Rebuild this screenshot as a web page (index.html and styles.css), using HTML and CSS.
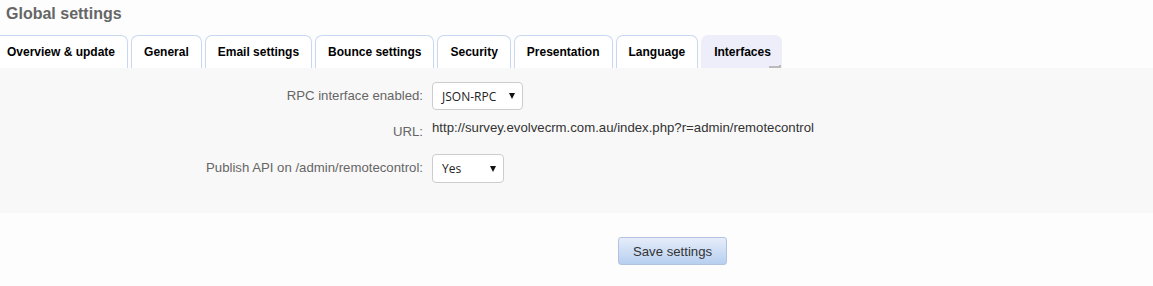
FILE: index.html
```html
<!DOCTYPE html>
<html lang="en">
<head>
  <meta charset="UTF-8" />
  <title>Global settings</title>
  <link rel="stylesheet" href="styles.css">
</head>
<body>
  <h1 class="page-title">Global settings</h1>

  <ul class="tabs">
    <li class="tab">Overview &amp; update</li>
    <li class="tab">General</li>
    <li class="tab">Email settings</li>
    <li class="tab">Bounce settings</li>
    <li class="tab">Security</li>
    <li class="tab">Presentation</li>
    <li class="tab">Language</li>
    <li class="tab active">Interfaces</li>
  </ul>

  <div class="panel">
    <div class="form-row">
      <label class="form-label">RPC interface enabled:</label>
      <div class="select select-rpc">
        <span>JSON-RPC</span>
        <span class="caret"></span>
      </div>
    </div>
    <div class="form-row">
      <label class="form-label">URL:</label>
      <div class="form-value">http://survey.evolvecrm.com.au/index.php?r=admin/remotecontrol</div>
    </div>
    <div class="form-row">
      <label class="form-label">Publish API on /admin/remotecontrol:</label>
      <div class="select select-yes">
        <span>Yes</span>
        <span class="caret"></span>
      </div>
    </div>
  </div>

  <div class="actions">
    <button class="save-btn">Save settings</button>
  </div>
</body>
</html>
```

FILE: styles.css
```css
body {
  margin: 0;
  padding: 0;
  background-color: #fdfdfd;
  font-family: "Liberation Sans", Arial, sans-serif;
  font-size: 13.2px;
}
.page-title {
  margin: 0;
  padding: 5px 6px 0;
  height: 30px;
  font-size: 16px;
  font-weight: bold;
  color: #666;
}
.tabs {
  list-style: none;
  margin: 0 0 0 -6px;
  padding: 0;
  display: flex;
  gap: 3px;
}
.tab {
  height: 33px;
  line-height: 33px;
  padding: 0 12px;
  border: 1px solid #c8d8f2;
  border-bottom: none;
  border-radius: 7px 7px 0 0;
  background: #fff;
  font-size: 12px;
  font-weight: bold;
  color: #000;
  box-sizing: border-box;
}
.tab.active {
  position: relative;
  padding-right: 10px;
  background: #eeeefa;
  border-color: #eeeefa;
}
.tab.active::after {
  content: "";
  position: absolute;
  right: 0;
  bottom: 0;
  width: 12px;
  height: 3px;
  border-right: 2px solid #bbb;
  border-bottom: 2px solid #bbb;
  box-sizing: border-box;
}
.panel {
  background-color: #f8f8f8;
  padding: 14px 0 30px;
  display: flex;
  flex-direction: column;
  gap: 8px;
}
.form-row {
  display: grid;
  grid-template-columns: 423px auto;
  column-gap: 9px;
  align-items: start;
}
.form-label {
  text-align: right;
  color: #666;
  line-height: 28px;
}
.form-value {
  padding-top: 2px;
  line-height: 15px;
  color: #333;
}
.select {
  height: 28px;
  display: flex;
  align-items: center;
  justify-content: space-between;
  padding: 0 7px 0 9px;
  background: #fff;
  border: 1px solid #ccc;
  border-radius: 4px;
  box-sizing: border-box;
  font-family: "Open Sans", sans-serif;
  font-size: 12px;
  color: #222;
}
.select-rpc {
  width: 91px;
}
.select-yes {
  width: 72px;
  height: 29px;
}
.caret {
  width: 0;
  height: 0;
  border-left: 3.5px solid transparent;
  border-right: 3.5px solid transparent;
  border-top: 6px solid #111;
}
.actions {
  padding: 24px 0 0 618px;
}
.save-btn {
  width: 109px;
  height: 28px;
  border: 1px solid #b3c3df;
  border-radius: 3px;
  background: linear-gradient(#e5edfa, #b8cff0);
  font-family: "Liberation Sans", Arial, sans-serif;
  font-size: 13.2px;
  color: #333;
  cursor: pointer;
}
```
